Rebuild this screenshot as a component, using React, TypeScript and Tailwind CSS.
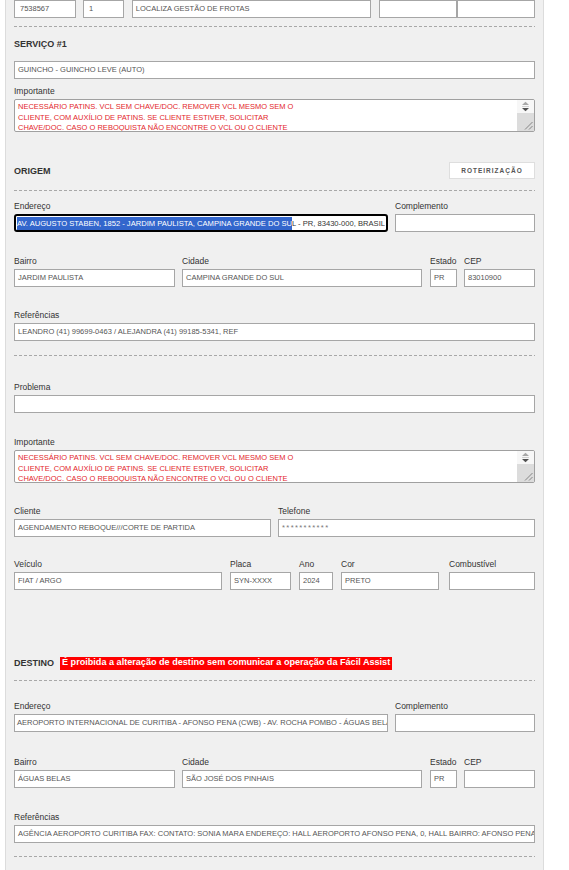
import React from "react";

const LINES = [
  "NECESSÁRIO PATINS. VCL SEM CHAVE/DOC. REMOVER VCL MESMO SEM O",
  "CLIENTE, COM AUXÍLIO DE PATINS. SE CLIENTE ESTIVER, SOLICITAR",
  "CHAVE/DOC. CASO O REBOQUISTA NÃO ENCONTRE O VCL OU O CLIENTE",
];

function Input({
  className = "",
  children,
  pad = "px-[3px]",
}: {
  className?: string;
  children?: React.ReactNode;
  pad?: string;
}) {
  return (
    <div
      className={`flex h-[18px] items-center overflow-hidden whitespace-nowrap border border-[#a6a6a6] bg-white text-[7.5px] leading-none text-[#555] ${pad} ${className}`}
    >
      {children}
    </div>
  );
}

function Field({
  label,
  className = "",
  children,
}: {
  label: string;
  className?: string;
  children?: React.ReactNode;
}) {
  return (
    <div className={`flex flex-col ${className}`}>
      <div className="mb-[2px] h-[12px] whitespace-nowrap text-[8.5px] leading-[12px] text-[#333]">{label}</div>
      {children}
    </div>
  );
}

function Dashed({ className = "" }: { className?: string }) {
  return (
    <div
      className={`h-px bg-[repeating-linear-gradient(90deg,#a8a8a8_0px,#a8a8a8_3px,transparent_3px,transparent_5px)] ${className}`}
    />
  );
}

function TextArea() {
  return (
    <div className="flex h-[33px] overflow-hidden rounded-[2px] border border-[#a0a0a0] bg-white">
      <div className="flex-1 overflow-hidden pl-[3px] pt-[2px] text-[7.5px] leading-[10.5px] text-[#e3262b]">
        {LINES.map((l) => (
          <div key={l} className="whitespace-nowrap">
            {l}
          </div>
        ))}
      </div>
      <div className="flex w-[17px] flex-col">
        <div className="flex h-[13px] items-center justify-center bg-[#f7f7f7]">
          <svg width="9" height="11" viewBox="0 0 9 11">
            <polygon points="1,4 4.5,0.8 8,4" fill="#a8a8a8" />
            <line x1="1" y1="5.5" x2="8" y2="5.5" stroke="#d0d0d0" strokeWidth="1" />
            <polygon points="1,7 8,7 4.5,10.3" fill="#505050" />
          </svg>
        </div>
        <div className="relative flex-1 bg-[#dcdcdc]">
          <svg className="absolute bottom-[1px] right-[1px]" width="10" height="10" viewBox="0 0 10 10">
            <line x1="9.5" y1="2" x2="2" y2="9.5" stroke="#7a7a7a" strokeWidth="0.9" />
            <line x1="9.5" y1="6" x2="6" y2="9.5" stroke="#7a7a7a" strokeWidth="0.9" />
          </svg>
        </div>
      </div>
    </div>
  );
}

function Heading({ children }: { children: React.ReactNode }) {
  return <div className="text-[9px] font-bold leading-[12px] text-[#333]">{children}</div>;
}

export default function App() {
  return (
    <div className="min-h-[870px] bg-white font-['Liberation_Sans',Arial,sans-serif]">
      <div className="ml-[5px] min-h-[870px] w-[539px] border-x border-[#dcdcdc] bg-[#f0f0f0] px-[8px]">
        {/* Row 1 */}
        <div className="flex h-[18px]">
          <Input className="w-[62px]" pad="px-[5px]">7538567</Input>
          <Input className="ml-[7px] w-[41px]" pad="px-[5px]">1</Input>
          <Input className="ml-[8px] w-[240px]" pad="px-[3px]">LOCALIZA GESTÃO DE FROTAS</Input>
          <Input className="ml-[8px] w-[78px]" />
          <Input className="w-[78px]" />
        </div>

        <Dashed className="mt-[8px]" />

        <div className="mt-[11px]">
          <Heading>SERVIÇO #1</Heading>
        </div>

        <Input className="mt-[11px] w-full">GUINCHO - GUINCHO LEVE (AUTO)</Input>

        <Field label="Importante" className="mt-[6px]">
          <TextArea />
        </Field>

        {/* ORIGEM */}
        <div className="mt-[30px] flex h-[17px] items-center justify-between">
          <Heading>ORIGEM</Heading>
          <div className="flex h-[17px] w-[86px] items-center justify-center border border-[#dedede] bg-white text-[6.5px] font-bold tracking-[1px] text-[#555]">
            ROTEIRIZAÇÃO
          </div>
        </div>

        <Dashed className="mt-[11px]" />

        <div className="mt-[9px] flex gap-[7px]">
          <Field label="Endereço" className="w-[374px]">
            <div className="flex h-[18px] items-center overflow-hidden whitespace-nowrap rounded-[3px] border-2 border-black bg-white pl-[1px] text-[7.6px] leading-[13px]">
              <span className="inline-block bg-[#3366cc] text-white">
                AV. AUGUSTO STABEN, 1852 - JARDIM PAULISTA, CAMPINA GRANDE DO SU
              </span>
              <span className="inline-block text-[#333]">L - PR, 83430-000, BRASIL</span>
            </div>
          </Field>
          <Field label="Complemento" className="flex-1">
            <Input className="w-full" />
          </Field>
        </div>

        <div className="mt-[23px] flex">
          <Field label="Bairro" className="w-[161px]">
            <Input>JARDIM PAULISTA</Input>
          </Field>
          <Field label="Cidade" className="ml-[7px] w-[240px]">
            <Input>CAMPINA GRANDE DO SUL</Input>
          </Field>
          <Field label="Estado" className="ml-[8px] w-[27px]">
            <Input>PR</Input>
          </Field>
          <Field label="CEP" className="ml-[7px] flex-1">
            <Input>83010900</Input>
          </Field>
        </div>

        <Field label="Referências" className="mt-[22px]">
          <Input>LEANDRO (41) 99699-0463 / ALEJANDRA (41) 99185-5341, REF</Input>
        </Field>

        <Dashed className="mt-[14px]" />

        <Field label="Problema" className="mt-[25px]">
          <Input />
        </Field>

        <Field label="Importante" className="mt-[23px]">
          <TextArea />
        </Field>

        <div className="mt-[22px] grid grid-cols-2 gap-[7px]">
          <Field label="Cliente">
            <Input>AGENDAMENTO REBOQUE///CORTE DE PARTIDA</Input>
          </Field>
          <Field label="Telefone">
            <Input className="tracking-[1.4px] text-[#777]">***********</Input>
          </Field>
        </div>

        <div className="mt-[21px] flex">
          <Field label="Veículo" className="w-[208px]">
            <Input>FIAT / ARGO</Input>
          </Field>
          <Field label="Placa" className="ml-[8px] w-[61px]">
            <Input>SYN-XXXX</Input>
          </Field>
          <Field label="Ano" className="ml-[8px] w-[34px]">
            <Input>2024</Input>
          </Field>
          <Field label="Cor" className="ml-[8px] w-[98px]">
            <Input>PRETO</Input>
          </Field>
          <Field label="Combustível" className="ml-[10px] flex-1">
            <Input />
          </Field>
        </div>

        {/* DESTINO */}
        <div className="mt-[66px] flex h-[14px] items-center">
          <Heading>DESTINO</Heading>
          <div className="ml-[6px] flex h-[13px] items-center bg-[#ff0000] px-[2px] text-[9.1px] font-bold leading-none text-white">
            É proibida a alteração de destino sem comunicar a operação da Fácil Assist
          </div>
        </div>

        <Dashed className="mt-[10px]" />

        <div className="mt-[19px] flex gap-[7px]">
          <Field label="Endereço" className="w-[374px]">
            <Input pad="pl-[2px]">
              AEROPORTO INTERNACIONAL DE CURITIBA - AFONSO PENA (CWB) - AV. ROCHA POMBO - ÁGUAS BELAS
            </Input>
          </Field>
          <Field label="Complemento" className="flex-1">
            <Input />
          </Field>
        </div>

        <div className="mt-[24px] flex">
          <Field label="Bairro" className="w-[161px]">
            <Input>ÁGUAS BELAS</Input>
          </Field>
          <Field label="Cidade" className="ml-[7px] w-[240px]">
            <Input>SÃO JOSÉ DOS PINHAIS</Input>
          </Field>
          <Field label="Estado" className="ml-[8px] w-[27px]">
            <Input>PR</Input>
          </Field>
          <Field label="CEP" className="ml-[7px] flex-1">
            <Input />
          </Field>
        </div>

        <Field label="Referências" className="mt-[23px]">
          <Input>
            AGÊNCIA AEROPORTO CURITIBA FAX: CONTATO: SONIA MARA ENDEREÇO: HALL AEROPORTO AFONSO PENA, 0, HALL BAIRRO: AFONSO PENA
          </Input>
        </Field>

        <Dashed className="mt-[13px]" />
      </div>
    </div>
  );
}
